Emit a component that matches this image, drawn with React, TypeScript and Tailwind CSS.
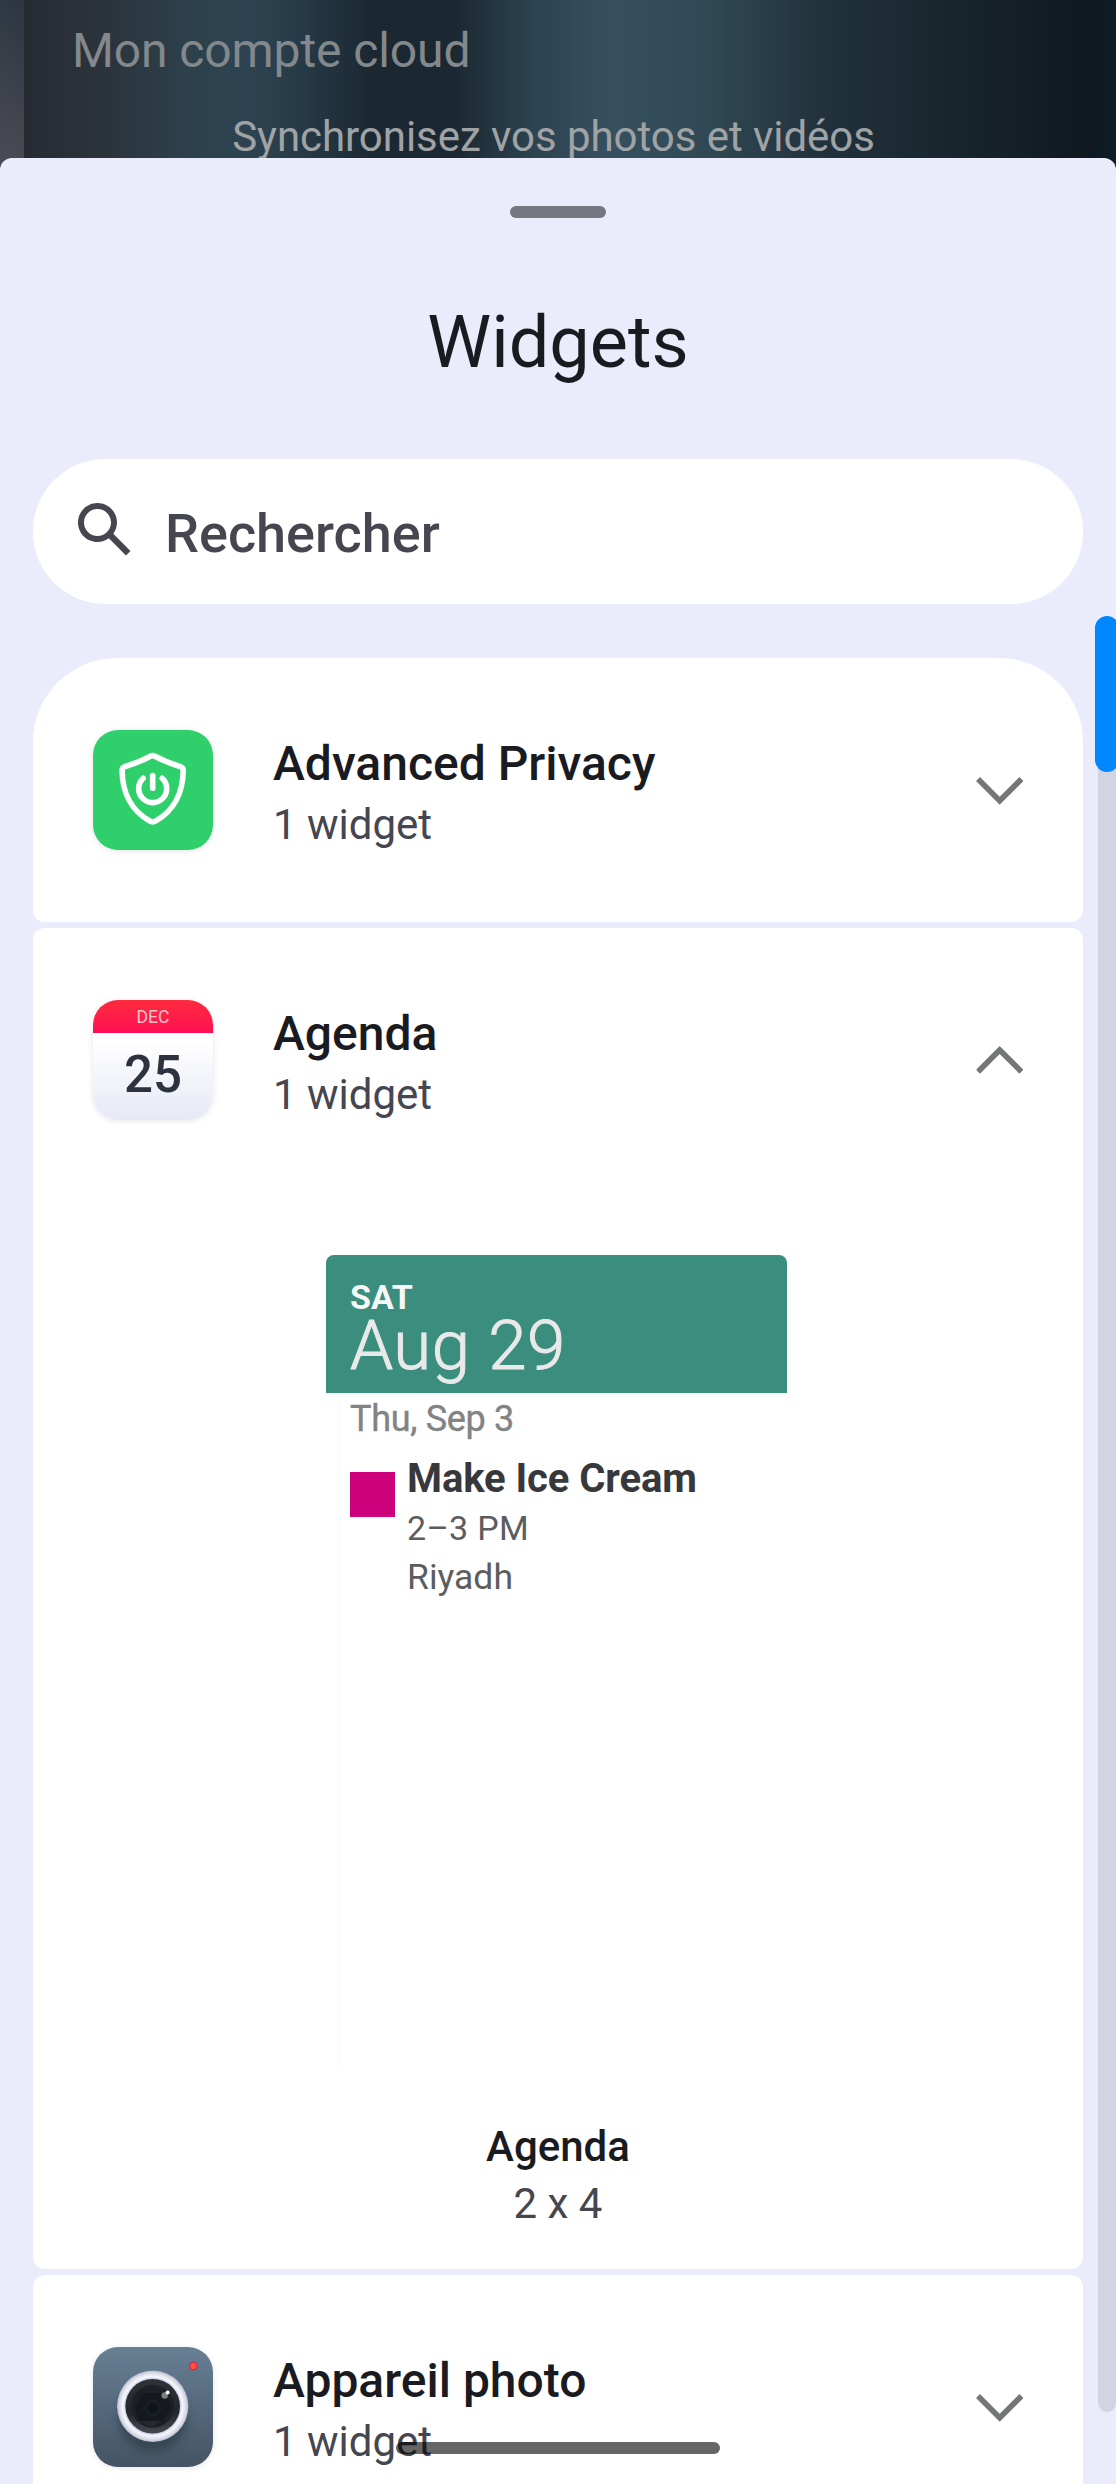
import type { ReactNode } from "react";

function SearchIcon() {
  return (
    <svg viewBox="0 0 24 24" className="-mt-[3px] size-[72px]" fill="currentColor">
      <path d="M20.49 19L14.76 13.27C15.53 12.2 16 10.91 16 9.5C16 5.91 13.09 3 9.5 3S3 5.91 3 9.5S5.91 16 9.5 16C10.91 16 12.2 15.53 13.27 14.76L19 20.49L20.49 19ZM5 9.5C5 7.01 7.01 5 9.5 5S14 7.01 14 9.5S11.99 14 9.5 14S5 11.99 5 9.5Z" />
    </svg>
  );
}

function PrivacyIcon() {
  return (
    <svg viewBox="0 0 120 120" className="size-full">
      <rect width="120" height="120" fill="#2fd06c" />
      <g fill="none" stroke="#fff" strokeWidth="5.6" strokeLinecap="round" strokeLinejoin="round">
        <path d="M57.5 26.2Q59.7 25 61.9 26.2Q74 32.6 87.8 36.8Q90.2 37.6 90.2 40.4C90 63 80.5 81 62.6 91Q59.7 92.9 56.8 91C38.9 81 29.3 63 29.1 40.4Q29.1 37.6 31.5 36.8Q45.4 32.6 57.5 26.2Z" />
        <path d="M50.2 48.3A14 14 0 1 0 69.2 48.3" />
        <path d="M59.7 45.5V58.3" />
      </g>
    </svg>
  );
}

function CalendarIcon() {
  return (
    <div className="flex size-full flex-col items-center bg-linear-to-b from-white from-35% to-[#e6e8f5]">
      <div className="flex h-[33px] w-full shrink-0 justify-center bg-linear-to-b from-[#ff2a3c] to-[#ff0c54] pt-[7px] text-[17.5px] leading-[20px] text-[#ffc3ce]">
        DEC
      </div>
      <div className="mt-[12px] text-[51px] leading-[60px] font-medium text-[#2c323e]">25</div>
    </div>
  );
}

function CameraIcon() {
  return (
    <svg viewBox="0 0 120 120" className="size-full">
      <defs>
        <linearGradient id="body" x1="0" y1="0" x2="0" y2="1">
          <stop offset="0" stopColor="#677f94" />
          <stop offset="1" stopColor="#455364" />
        </linearGradient>
        <radialGradient id="ring" cx="59.7" cy="59.3" r="35.7" gradientUnits="userSpaceOnUse">
          <stop offset="0.76" stopColor="#c3c8e6" />
          <stop offset="0.83" stopColor="#f7f8ff" />
          <stop offset="0.89" stopColor="#e7e7ee" />
          <stop offset="0.94" stopColor="#d9d9e4" />
          <stop offset="1" stopColor="#b4b8d0" />
        </radialGradient>
        <linearGradient id="glass" x1="0" y1="0" x2="0" y2="1">
          <stop offset="0" stopColor="#303236" />
          <stop offset="0.6" stopColor="#23262b" />
          <stop offset="1" stopColor="#46494d" />
        </linearGradient>
        <filter id="soft" x="-30%" y="-30%" width="160%" height="160%">
          <feGaussianBlur stdDeviation="4" />
        </filter>
      </defs>
      <rect width="120" height="120" fill="url(#body)" />
      <circle cx="59.7" cy="71" r="34" fill="#33444f" opacity="0.85" filter="url(#soft)" />
      <circle cx="59.7" cy="59.3" r="35.7" fill="url(#ring)" />
      <circle cx="59.7" cy="59.3" r="27.3" fill="url(#glass)" />
      <circle cx="59.7" cy="59.3" r="21.5" fill="#1d2025" />
      <path d="M50 46H70L79 60L70 75H46L42 60Z" fill="#15191f" />
      <path d="M44 74H68L59 80Z" fill="#27282d" />
      <circle cx="59.7" cy="61" r="8.5" fill="#1a1d24" />
      <circle cx="59.7" cy="61" r="5" fill="#0e151d" />
      <circle cx="71.7" cy="48.5" r="3.2" fill="#7b7d80" />
      <circle cx="74.6" cy="45.6" r="2" fill="#fff" />
      <circle cx="100.3" cy="19" r="4.4" fill="#e0244f" />
      <circle cx="100.3" cy="19" r="2.9" fill="#ff5530" />
    </svg>
  );
}

function Chevron({ open }: { open?: boolean }) {
  return (
    <svg
      viewBox="0 0 47.4 27.7"
      className={`h-[27.7px] w-[47.4px] ${open ? "-mt-[1px] rotate-180" : "mt-[2px]"}`}
      fill="#757678"
    >
      <path d="M0 4L4 0L23.7 19.7L43.4 0L47.4 4L23.7 27.7Z" />
    </svg>
  );
}

type AppRowProps = {
  name: string;
  count: string;
  icon: ReactNode;
  open?: boolean;
};

function AppRow({ name, count, icon, open }: AppRowProps) {
  return (
    <div className="flex h-[264px] shrink-0 items-center px-[60px]">
      <div className="size-[120px] shrink-0 overflow-hidden rounded-[25px] shadow-[0_1px_6px_rgba(0,0,0,0.1)]">
        {icon}
      </div>
      <div className="ml-[60px] flex-1 pt-[5px]">
        <h2 className="text-[48px] leading-[56px] font-medium text-[#1a1b21]">{name}</h2>
        <p className="mt-2 text-[42px] leading-[50px] text-[#45464f]">{count}</p>
      </div>
      <Chevron open={open} />
    </div>
  );
}

function AgendaPreview() {
  return (
    <div className="mt-[63px] ml-[293px] h-[812px] w-[461px]">
      <div className="h-[138px] rounded-t-[8px] bg-[#3b8d7e] pt-[24px] pl-[24px]">
        <p className="text-[34px] leading-[36px] font-bold text-[#f6f8f8]">SAT</p>
        <p className="mt-px text-[69px] leading-[60px] font-light tracking-[0.6px] text-[#e9e9ea] [-webkit-text-stroke:1px_#e9e9ea]">
          Aug 29
        </p>
      </div>
      <div className="ml-[11px] h-[673px] border-l-4 border-[#fbfcfc] pt-[5px] pl-[9px]">
        <p className="text-[36px] leading-[42px] tracking-[-0.3px] text-[#828385] [-webkit-text-stroke:0.4px_#828385]">
          Thu, Sep 3
        </p>
        <div className="mt-[16px] flex">
          <div className="mt-[16px] size-[45px] bg-[#cc007a]" />
          <div className="ml-[12px] text-[#5c5d60]">
            <p className="text-[40px] leading-[46px] font-bold tracking-[-0.1px] text-[#37383c]">Make Ice Cream</p>
            <p className="mt-[2px] text-[34px] leading-[48px] tracking-[0.3px]">2–3 PM</p>
            <p className="mt-px text-[35.5px] leading-[48px]">Riyadh</p>
          </div>
        </div>
      </div>
    </div>
  );
}

function Wallpaper() {
  return (
    <div className="flex h-[176px] w-full bg-[linear-gradient(180deg,rgba(90,84,94,0)_0%,rgba(90,84,94,0.7)_100%),linear-gradient(90deg,#2f3943_0px,#2c353f_24px,#0c151d_1080px,#0e1d29_1116px)] bg-[length:24px_176px,auto] bg-no-repeat px-[24px]">
      <div className="w-full bg-[linear-gradient(90deg,#272c33_0px,#2b333b_80px,#2d414c_165px,#2e4351_225px,#263946_280px,#1b2832_350px,#1b2831_430px,#2c4351_510px,#375060_590px,#2f4854_690px,#22333d_790px,#18252d_930px,#101820_1068px)] pt-[23px] text-[#82888c]">
        <p className="ml-[48px] text-[48px] leading-[56px] tracking-[-0.1px]">Mon compte cloud</p>
        <p className="mt-[33px] pr-[9px] text-center text-[42px] leading-[50px] tracking-[-0.05px] text-[#a0a3a5]">
          Synchronisez vos photos et vidéos
        </p>
      </div>
    </div>
  );
}

export default function App() {
  return (
    <div className="relative h-[2484px] w-[1116px] overflow-hidden font-['Roboto',sans-serif]">
      <Wallpaper />

      {/* Bottom sheet */}
      <div className="relative -mt-[18px] flex h-[2326px] flex-col rounded-t-[12px] bg-[#eaebfb] px-[33px] pt-[48px]">
        <div className="h-[12px] w-[96px] shrink-0 self-center rounded-full bg-[#757780]" />
        <h1 className="mt-[83px] text-center text-[72px] leading-[84px] text-[#1a1b21]">Widgets</h1>

        <div className="mt-[74px] flex h-[145px] shrink-0 items-center rounded-[72px] bg-white pl-[36px] text-[#45464f]">
          <SearchIcon />
          <span className="ml-[24px] pt-[5px] text-[54px] leading-[64px] font-medium">Rechercher</span>
        </div>

        <div className="mt-[54px] flex flex-col gap-[6px]">
          <section className="rounded-t-[84px] rounded-b-[12px] bg-white">
            <AppRow name="Advanced Privacy" count="1 widget" icon={<PrivacyIcon />} />
          </section>
          <section className="h-[1341px] rounded-[12px] bg-white">
            <AppRow name="Agenda" count="1 widget" icon={<CalendarIcon />} open />
            <AgendaPreview />
            <div className="mt-[55px] text-center text-[42px] leading-[50px]">
              <p className="font-medium text-[#1a1b21]">Agenda</p>
              <p className="mt-[7px] text-[#45464f]">2 x 4</p>
            </div>
          </section>
          <section className="h-[264px] rounded-[12px] bg-white">
            <AppRow name="Appareil photo" count="1 widget" icon={<CameraIcon />} />
          </section>
        </div>
      </div>

      {/* Scrollbar */}
      <div className="absolute top-[616px] right-0 h-[1796px] w-[18px] rounded-[9px] bg-[#d2d4e1]" />
      <div className="absolute top-[616px] -right-[3px] h-[156px] w-[24px] rounded-full bg-[#0086ff]" />

      {/* Gesture bar */}
      <div className="absolute top-[2442px] left-[396px] h-[12px] w-[324px] rounded-full bg-black/60" />
    </div>
  );
}
